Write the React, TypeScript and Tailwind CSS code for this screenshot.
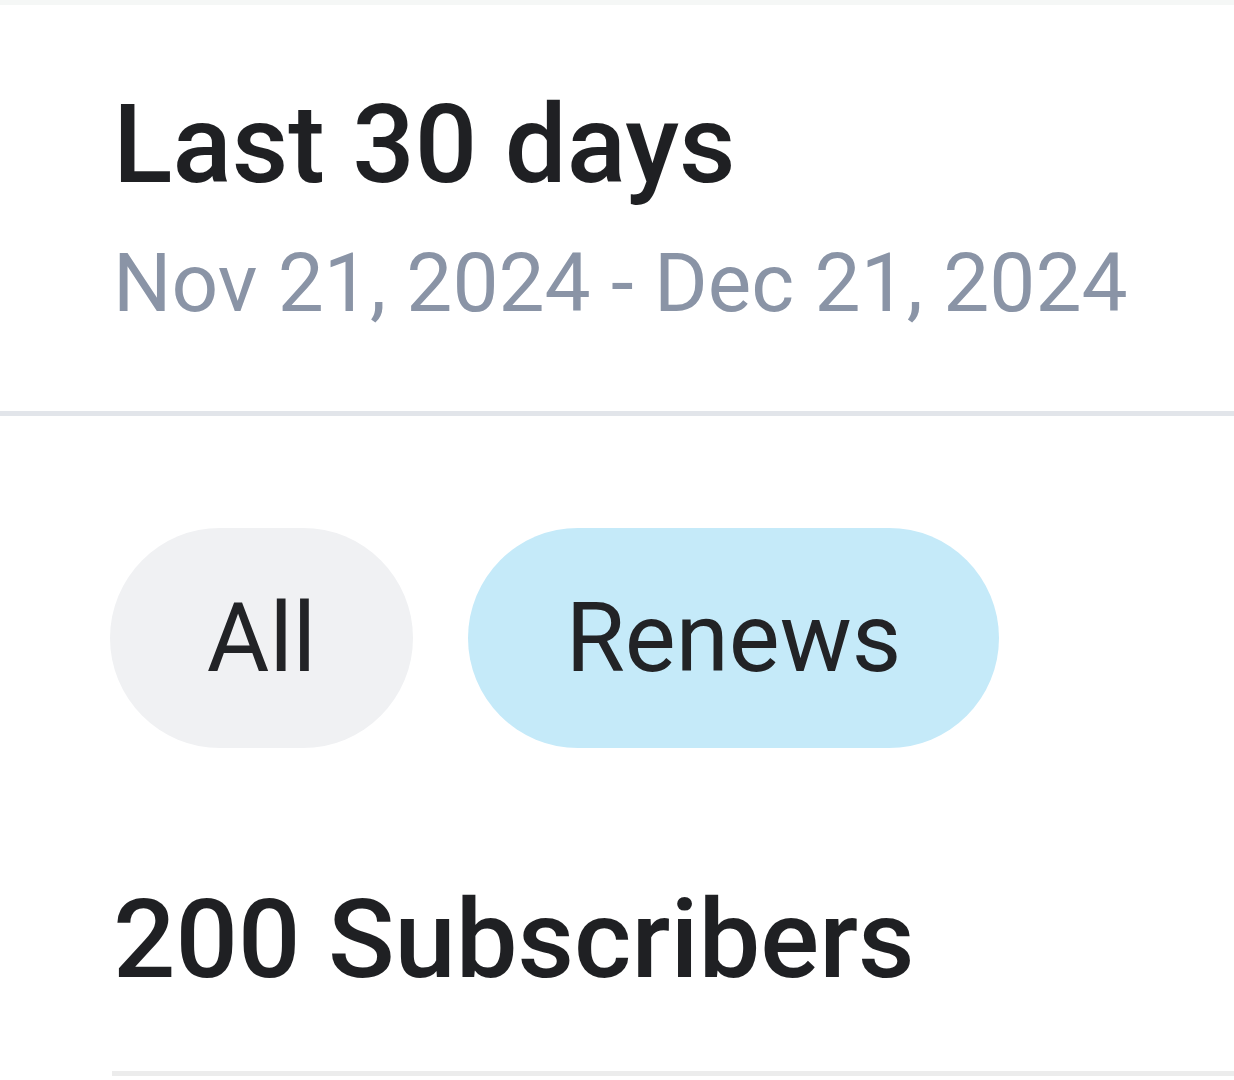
export default function App() {
  return (
    <div className="w-[1234px] h-[1080px] overflow-hidden bg-white font-['Roboto',sans-serif]">
      <div className="h-[5px] bg-[#f5f7f6]" />

      {/* Header */}
      <div className="pl-[113px] pt-[80px] h-[406px]">
        <h1 className="text-[110px] leading-[120px] font-medium text-[#1f2023]">Last 30 days</h1>
        <p className="mt-[28px] text-[82px] leading-[100px] text-[#8a94a6]">Nov 21, 2024 - Dec 21, 2024</p>
      </div>
      <div className="h-[5px] bg-[#e2e5ea]" />

      {/* Filters */}
      <div className="pl-[110px] pt-[112px] flex gap-[55px]">
        <button className="h-[220px] w-[303px] rounded-full bg-[#f0f1f3] text-[96px] text-[#222326]">All</button>
        <button className="h-[220px] w-[531px] rounded-full bg-[#c5eaf9] text-[96px] text-[#222326]">Renews</button>
      </div>

      {/* Count */}
      <div className="pl-[113px] pt-[127px] h-[323px]">
        <h2 className="text-[110px] leading-[130px] font-medium text-[#1f2023]">200 Subscribers</h2>
      </div>
      <div className="ml-[112px] h-[5px] bg-[#ececec]" />
    </div>
  );
}
